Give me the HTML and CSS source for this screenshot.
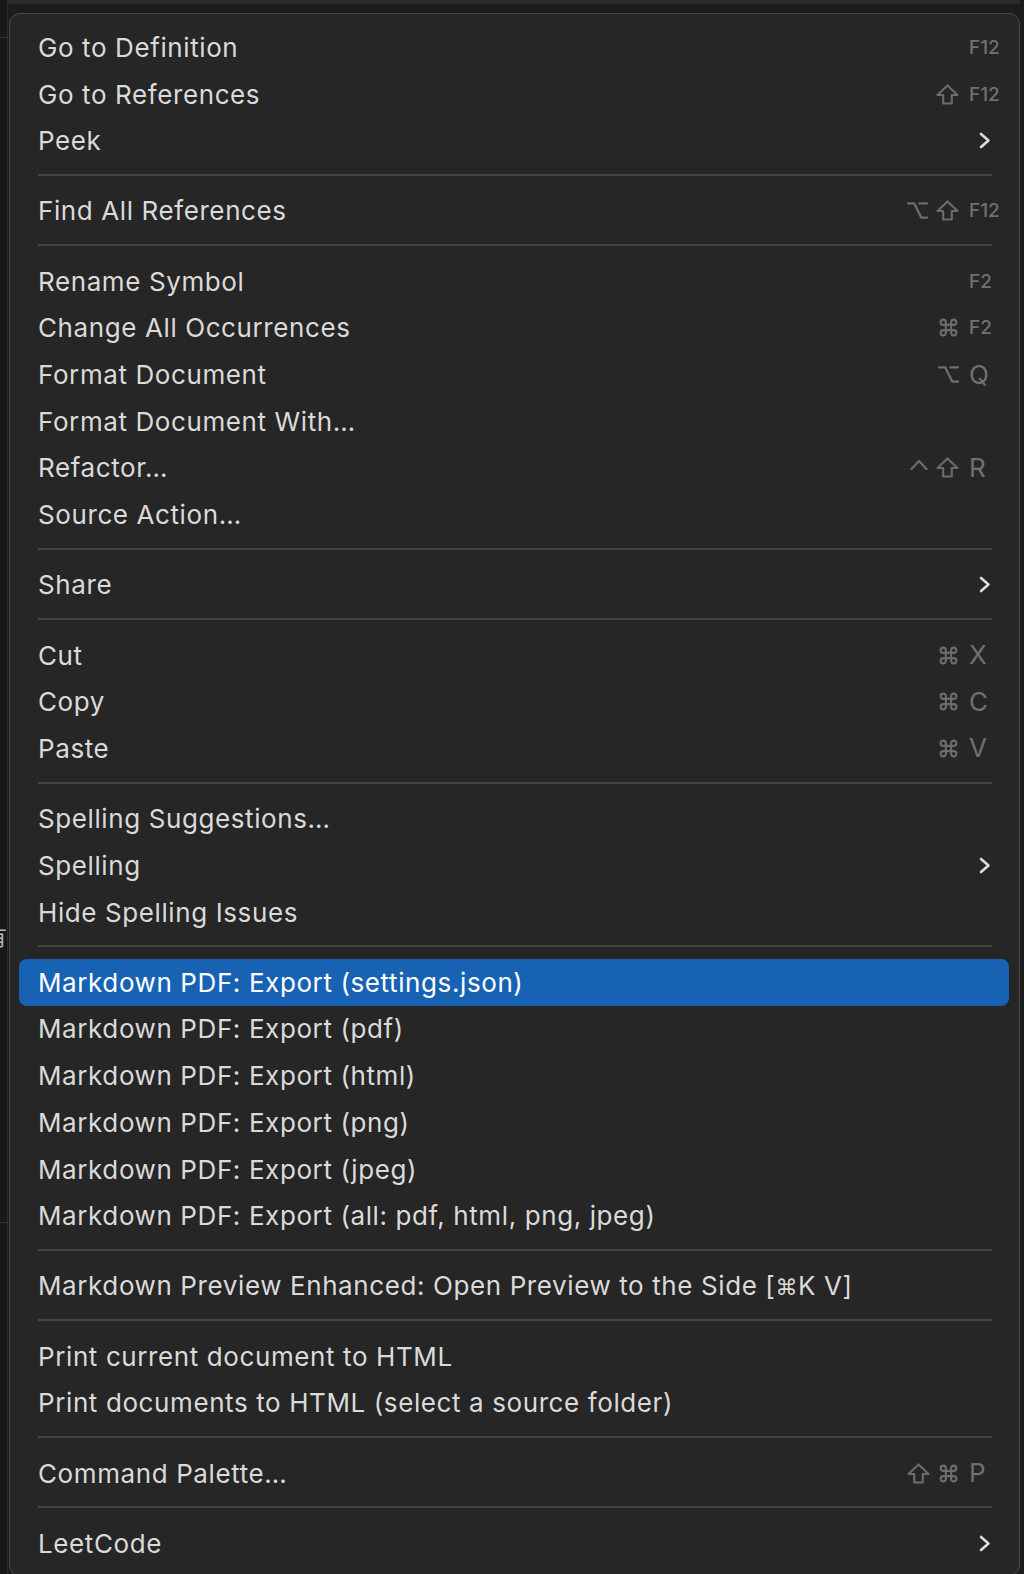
FILE: index.html
```html
<!DOCTYPE html>
<html>
<head>
<meta charset="utf-8">
<link rel="stylesheet" href="styles.css">
</head>
<body>
<div class="screen">
  <div class="gutter">
    <div class="g1"></div>
    <div class="g2"><span class="cjk">有</span></div>
    <div class="g3"></div>
  </div>
  <div class="menu">
    <div class="row"><span class="label">Go to Definition</span><span class="sc"><span class="mods"></span><span class="key fn">F12</span></span></div>
    <div class="row"><span class="label">Go to References</span><span class="sc"><span class="mods"><svg class="ic shift" viewBox="0 0 24 22"><path d="M12 1.5 L22.5 11.5 H16.5 V20.5 H7.5 V11.5 H1.5 Z"/></svg></span><span class="key fn">F12</span></span></div>
    <div class="row"><span class="label">Peek</span><span class="sc"><span class="key"><svg class="chev" viewBox="0 0 12 17"><path d="M2 2 L9.5 8.5 L2 15"/></svg></span></span></div>
    <div class="sep"></div>
    <div class="row"><span class="label">Find All References</span><span class="sc"><span class="mods"><svg class="ic opt" viewBox="0 0 22 20"><path d="M1 2.5 H7.5 L15 17.5 H21 M13 2.5 H21"/></svg><svg class="ic shift" viewBox="0 0 24 22"><path d="M12 1.5 L22.5 11.5 H16.5 V20.5 H7.5 V11.5 H1.5 Z"/></svg></span><span class="key fn">F12</span></span></div>
    <div class="sep"></div>
    <div class="row"><span class="label">Rename Symbol</span><span class="sc"><span class="mods"></span><span class="key fn">F2</span></span></div>
    <div class="row"><span class="label">Change All Occurrences</span><span class="sc"><span class="mods"><svg class="ic cmd" viewBox="0 0 24 24"><path d="M15 6v12a3 3 0 1 0 3-3H6a3 3 0 1 0 3 3V6a3 3 0 1 0-3 3h12a3 3 0 1 0-3-3"/></svg></span><span class="key fn">F2</span></span></div>
    <div class="row"><span class="label">Format Document</span><span class="sc"><span class="mods"><svg class="ic opt" viewBox="0 0 22 20"><path d="M1 2.5 H7.5 L15 17.5 H21 M13 2.5 H21"/></svg></span><span class="key">Q</span></span></div>
    <div class="row"><span class="label">Format Document With…</span></div>
    <div class="row"><span class="label">Refactor…</span><span class="sc"><span class="mods"><svg class="ic ctrl" viewBox="0 0 18 12"><path d="M1.5 11 L9 3 L16.5 11"/></svg><svg class="ic shift" viewBox="0 0 24 22"><path d="M12 1.5 L22.5 11.5 H16.5 V20.5 H7.5 V11.5 H1.5 Z"/></svg></span><span class="key">R</span></span></div>
    <div class="row"><span class="label">Source Action…</span></div>
    <div class="sep"></div>
    <div class="row"><span class="label">Share</span><span class="sc"><span class="key"><svg class="chev" viewBox="0 0 12 17"><path d="M2 2 L9.5 8.5 L2 15"/></svg></span></span></div>
    <div class="sep"></div>
    <div class="row"><span class="label">Cut</span><span class="sc"><span class="mods"><svg class="ic cmd" viewBox="0 0 24 24"><path d="M15 6v12a3 3 0 1 0 3-3H6a3 3 0 1 0 3 3V6a3 3 0 1 0-3 3h12a3 3 0 1 0-3-3"/></svg></span><span class="key">X</span></span></div>
    <div class="row"><span class="label">Copy</span><span class="sc"><span class="mods"><svg class="ic cmd" viewBox="0 0 24 24"><path d="M15 6v12a3 3 0 1 0 3-3H6a3 3 0 1 0 3 3V6a3 3 0 1 0-3 3h12a3 3 0 1 0-3-3"/></svg></span><span class="key">C</span></span></div>
    <div class="row"><span class="label">Paste</span><span class="sc"><span class="mods"><svg class="ic cmd" viewBox="0 0 24 24"><path d="M15 6v12a3 3 0 1 0 3-3H6a3 3 0 1 0 3 3V6a3 3 0 1 0-3 3h12a3 3 0 1 0-3-3"/></svg></span><span class="key">V</span></span></div>
    <div class="sep"></div>
    <div class="row"><span class="label">Spelling Suggestions…</span></div>
    <div class="row"><span class="label">Spelling</span><span class="sc"><span class="key"><svg class="chev" viewBox="0 0 12 17"><path d="M2 2 L9.5 8.5 L2 15"/></svg></span></span></div>
    <div class="row"><span class="label">Hide Spelling Issues</span></div>
    <div class="sep"></div>
    <div class="row active"><span class="label">Markdown PDF: Export (settings.json)</span></div>
    <div class="row"><span class="label">Markdown PDF: Export (pdf)</span></div>
    <div class="row"><span class="label">Markdown PDF: Export (html)</span></div>
    <div class="row"><span class="label">Markdown PDF: Export (png)</span></div>
    <div class="row"><span class="label">Markdown PDF: Export (jpeg)</span></div>
    <div class="row"><span class="label">Markdown PDF: Export (all: pdf, html, png, jpeg)</span></div>
    <div class="sep"></div>
    <div class="row"><span class="label">Markdown Preview Enhanced: Open Preview to the Side [<span class="sym">⌘</span>K V]</span></div>
    <div class="sep"></div>
    <div class="row"><span class="label">Print current document to HTML</span></div>
    <div class="row"><span class="label">Print documents to HTML (select a source folder)</span></div>
    <div class="sep"></div>
    <div class="row"><span class="label">Command Palette…</span><span class="sc"><span class="mods"><svg class="ic shift" viewBox="0 0 24 22"><path d="M12 1.5 L22.5 11.5 H16.5 V20.5 H7.5 V11.5 H1.5 Z"/></svg><svg class="ic cmd" viewBox="0 0 24 24"><path d="M15 6v12a3 3 0 1 0 3-3H6a3 3 0 1 0 3 3V6a3 3 0 1 0-3 3h12a3 3 0 1 0-3-3"/></svg></span><span class="key">P</span></span></div>
    <div class="sep"></div>
    <div class="row"><span class="label">LeetCode</span><span class="sc"><span class="key"><svg class="chev" viewBox="0 0 12 17"><path d="M2 2 L9.5 8.5 L2 15"/></svg></span></span></div>
  </div>
  <div class="rgutter"></div>
</div>
</body>
</html>
```

FILE: styles.css
```css
html, body {
  margin: 0;
  padding: 0;
}
body {
  width: 1024px;
  height: 1574px;
  overflow: hidden;
  background: linear-gradient(#2a2a2a 0, #2a2a2a 4px, #1c1c1c 4px);
  font-family: Inter, "Noto Sans", "Liberation Sans", sans-serif;
}
.screen {
  display: flex;
  align-items: flex-start;
  height: 1574px;
}
.gutter {
  width: 7px;
  height: 1574px;
  flex: none;
  background: #181818;
  border-right: 1px solid #2f2f2f;
  display: flex;
  flex-direction: column;
  overflow: hidden;
}
.g1 {
  height: 37px;
  border-bottom: 1px solid #333333;
  flex: none;
}
.g2 {
  height: 1184px;
  border-bottom: 1px solid #333333;
  flex: none;
  position: relative;
}
.cjk {
  position: absolute;
  left: -15px;
  top: 886px;
  font-family: "Noto Sans CJK SC", sans-serif;
  font-size: 22px;
  color: #b8b8b8;
  line-height: 1;
}
.g3 {
  flex: 1;
}
.menu {
  margin-top: 13px;
  margin-left: 1px;
  width: 1011px;
  box-sizing: border-box;
  flex: none;
  background: #262626;
  border: 1px solid #4a4a4a;
  border-radius: 11px;
  padding: 10px 10px 8px 9px;
  display: flex;
  flex-direction: column;
}
.rgutter {
  flex: 1;
  height: 1574px;
  background: #1c1c1c;
}
.row {
  height: 46.68px;
  display: flex;
  align-items: center;
  padding-left: 19px;
  border-radius: 8px;
  color: #dadada;
  font-size: 26px;
  letter-spacing: 0.6px;
  white-space: nowrap;
}
.row.active {
  background: #1862b4;
  color: #ffffff;
}
.label {
  flex: 1;
}
.sym {
  font-family: "DejaVu Sans", sans-serif;
  font-size: 22px;
}
.sc {
  display: flex;
  align-items: center;
  color: #707070;
  letter-spacing: 0;
}
.mods {
  display: flex;
  align-items: center;
  gap: 8px;
  margin-right: 10px;
}
.key {
  width: 40px;
  display: flex;
  align-items: center;
  font-size: 26px;
  line-height: 1;
}
.key.fn {
  font-size: 19px;
  font-weight: 500;
}
.ic {
  fill: none;
  stroke: #6c6c6c;
  stroke-linejoin: round;
  stroke-linecap: round;
}
.shift {
  width: 23px;
  height: 21px;
  stroke-width: 2.2;
}
.opt {
  width: 21px;
  height: 19px;
  stroke-width: 2.4;
}
.ctrl {
  width: 18px;
  height: 12px;
  stroke-width: 2.4;
  margin-bottom: 8px;
}
.cmd {
  width: 21px;
  height: 21px;
  stroke-width: 2.4;
}
.chev {
  width: 12px;
  height: 17px;
  margin-left: 10px;
  fill: none;
  stroke: #dcdcdc;
  stroke-width: 2.6;
  stroke-linecap: round;
  stroke-linejoin: round;
}
.sep {
  height: 2px;
  background: #454545;
  margin: 9.8px 17px 11.8px 19px;
  flex: none;
}
```
